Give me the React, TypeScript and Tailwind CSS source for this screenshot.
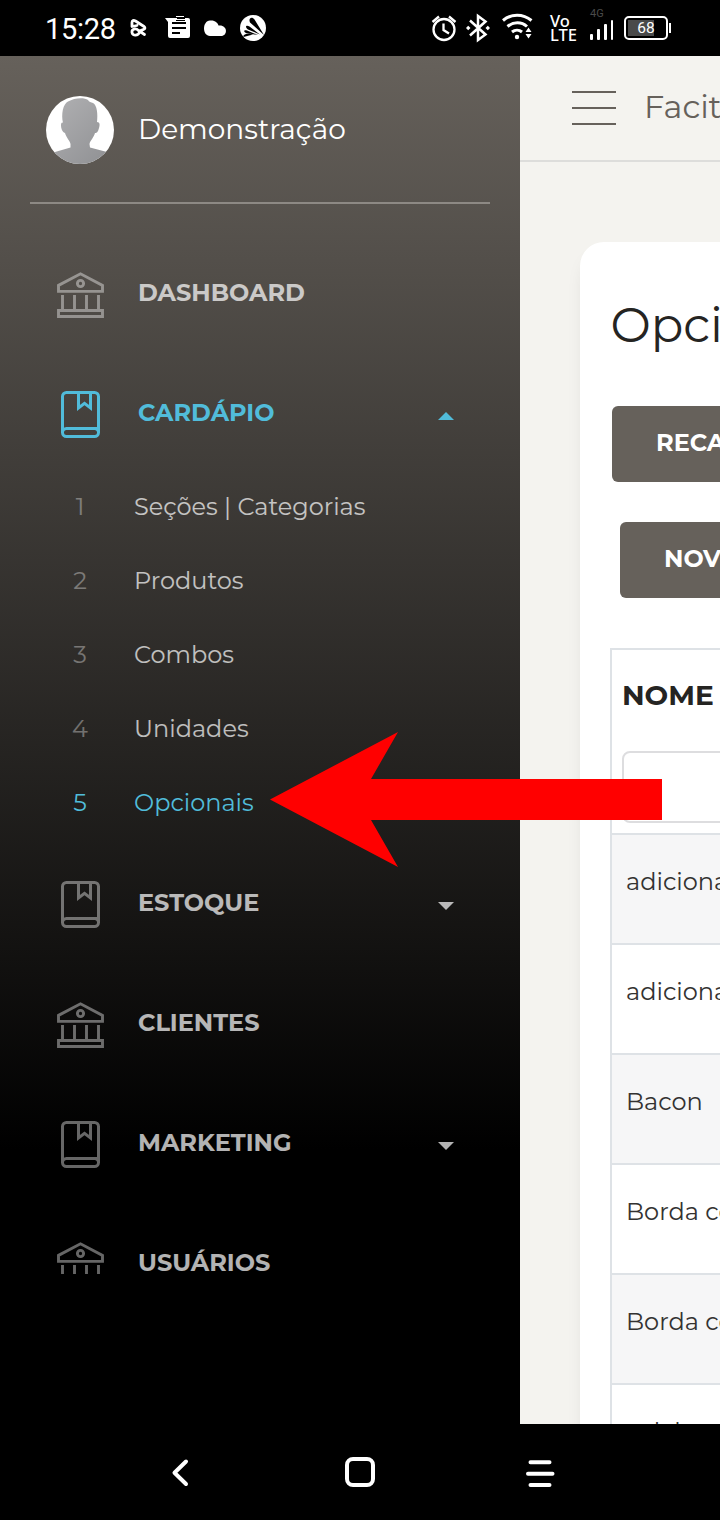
import React from "react";

function BankIcon({ clipped = false }: { clipped?: boolean }) {
  return (
    <svg
      className={clipped ? "h-[32px] w-[48px]" : "h-[47px] w-[48px]"}
      viewBox={clipped ? "0 0 48 32" : "0 0 48 47"}
      fill="none"
      stroke="currentColor"
      strokeWidth="2.9"
    >
      <path d="M1.5 13.4 23.5 1.8 45.5 13.4V19.4H1.5Z" />
      <circle cx="23.5" cy="11.5" r="3.1" />
      <path d="M5.5 23V37M17.5 23V37M29.5 23V37M41.5 23V37" />
      <path d="M1.5 38.5H45.5V44.5H1.5Z" />
    </svg>
  );
}

function BookIcon() {
  return (
    <svg className="h-[47px] w-[39px]" viewBox="0 0 39 47" fill="none" stroke="currentColor" strokeWidth="3">
      <rect x="1.5" y="1.5" width="36" height="44" rx="4" />
      <path d="M37.5 37.5H5.5A4 4 0 0 0 1.5 41.5M33.500 37.500A4 4 0 0 1 37.500 41.500" />
      <path d="M17.5 1.5V17L23.5 12.3 29.5 17V1.5" />
    </svg>
  );
}

type ItemProps = { label: string; icon: "bank" | "book" | "clipped"; open?: boolean; caret?: boolean };

function MenuItem({ label, icon, open, caret }: ItemProps) {
  return (
    <a className={`flex h-[120px] items-center ${open ? "text-[#51bcda]" : "text-white"}`}>
      <span className={`flex w-[138px] shrink-0 pt-[5px] ${open ? "" : "opacity-40"} ${icon === "book" ? "pl-[61px]" : "pl-[57px]"}`}>
        {icon === "book" ? <BookIcon /> : (
          <span className="flex h-[47px] items-start pt-[1px]"><BankIcon clipped={icon === "clipped"} /></span>
        )}
      </span>
      <span className={`pt-[2px] text-2xl font-bold ${open ? "" : "opacity-70"}`}>{label}</span>
      {caret && (
        <svg className={`mt-[7px] mr-[66px] ml-auto h-[8px] w-[16px] ${open ? "" : "opacity-70"}`} viewBox="0 0 16 8" fill="currentColor">
          <path d={open ? "M0 8 8 0 16 8Z" : "M0 0 8 8 16 0Z"} />
        </svg>
      )}
    </a>
  );
}

const sections = [
  { n: "1", label: "Seções | Categorias" },
  { n: "2", label: "Produtos" },
  { n: "3", label: "Combos" },
  { n: "4", label: "Unidades" },
  { n: "5", label: "Opcionais" },
];

function Avatar() {
  return (
    <svg className="h-[68px] w-[68px]" viewBox="0 0 68 68">
      <defs>
        <clipPath id="avatar-clip"><circle cx="34" cy="34" r="34" /></clipPath>
        <linearGradient id="avatar-fill" x1="0" y1="0" x2="1" y2="1">
          <stop offset="0" stopColor="#b2b2b4" />
          <stop offset="1" stopColor="#8e8f92" />
        </linearGradient>
      </defs>
      <g clipPath="url(#avatar-clip)">
        <rect width="68" height="68" fill="#fff" />
        <path
          d="M17 27C15 18 17 8 22 5.500C28 2 38 1 42 4C43 6 45 6 47 7C51 9 52 18 51 26C54 26 54 29 53 32C52 36 51 37 49 37C48 41 44 45 43.500 48L44 51.500L61 56L68 59V68H0V59L9 56L24.500 51.500V48C24 45 20 41 19 37C16 36 15 32 15 29C15 27 16 26 17 27Z"
          fill="url(#avatar-fill)"
        />
      </g>
    </svg>
  );
}

function Sidebar() {
  return (
    <aside className="h-full w-[520px] shrink-0 bg-[linear-gradient(#66615b_0%,#000_80%)] text-white">
      <div className="mx-[30px] flex h-[148px] items-center gap-[24px] border-b-2 border-[#8d8984] pt-[2px] pl-[16px]">
        <Avatar />
        <span className="pb-[2px] text-[28px] font-normal">Demonstração</span>
      </div>
      <nav className="pt-[28px]">
        <MenuItem label="DASHBOARD" icon="bank" />
        <MenuItem label="CARDÁPIO" icon="book" open caret />
        <ul className="-mt-[2px] mb-[2px]">
          {sections.map((s) => (
            <li key={s.n} className={`flex h-[74px] items-center text-2xl ${s.n === "5" ? "text-[#51bcda]" : "text-white"}`}>
              <span className={`w-[160px] text-center ${s.n === "5" ? "" : "opacity-35"}`}>{s.n}</span>
              <span className={`-ml-[26px] ${s.n === "5" ? "" : "opacity-70"}`}>{s.label}</span>
            </li>
          ))}
        </ul>
        <MenuItem label="ESTOQUE" icon="book" caret />
        <MenuItem label="CLIENTES" icon="bank" />
        <MenuItem label="MARKETING" icon="book" caret />
        <MenuItem label="USUÁRIOS" icon="clipped" />
      </nav>
    </aside>
  );
}

const rows = ["adicional", "adicional", "Bacon", "Borda com", "Borda com", "calabresa"];

function Content() {
  return (
    <main className="h-full w-[200px] overflow-hidden bg-[#f4f3ef] whitespace-nowrap">
      <header className="flex h-[106px] items-center border-b-2 border-[#dddddb] pl-[52px] text-[#66615b]">
        <span className="flex w-[44px] shrink-0 flex-col gap-[14px]">
          <span className="h-[2px] bg-[#66615b]" />
          <span className="h-[2px] bg-[#66615b]" />
          <span className="h-[2px] bg-[#66615b]" />
        </span>
        <span className="ml-[28px] pb-[2px] text-[32px]">Facit</span>
      </header>
      <section className="mt-[80px] ml-[60px] h-[1300px] w-[600px] rounded-[24px] bg-white pt-[48px] pl-[30px] text-[#252422] shadow-[0_12px_20px_-8px_rgba(0,0,0,0.15)]">
        <h1 className="h-[72px] pl-[0.500px] text-5xl leading-[70px] font-normal">Opcionais</h1>
        <div className="mt-[44px] flex flex-col gap-[40px] pl-[2px] text-2xl font-bold text-white">
          <button className="flex h-[76px] w-[400px] items-center rounded-[6px] bg-[#66615b] pb-[3px] pl-[44px]">RECALCULAR</button>
          <button className="ml-[8px] flex h-[76px] w-[400px] items-center rounded-[6px] bg-[#66615b] pb-[3px] pl-[44px]">NOVO</button>
        </div>
        <div className="mt-[50px] border-t-2 border-l-2 border-[#dee2e6]">
          <div className="h-[183px] pl-[10px]">
            <div className="flex h-[101px] items-center pb-[11px] text-[28px] font-bold">NOME</div>
            <div className="h-[72px] w-[400px] rounded-[8px] border-2 border-[#dddddf] bg-white" />
          </div>
          {rows.map((row, i) => (
            <div
              key={i}
              className={`flex h-[110px] items-center border-t-2 border-[#dee2e6] pb-[14px] pl-[14px] text-2xl text-[#333231] ${i % 2 === 0 ? "bg-[#f6f6f7]" : "bg-white"}`}
            >
              {row}
            </div>
          ))}
        </div>
      </section>
    </main>
  );
}

function StatusBar() {
  return (
    <div className="flex h-[56px] shrink-0 items-center bg-black text-white">
      <span className="ml-[45px] w-[84px] pt-[4px] font-['Roboto'] text-[29px] tracking-[-0.300px]">15:28</span>
      <svg className="h-[56px] w-[150px]" viewBox="129 0 150 56" fill="none">
        <path
          d="M132 26.500V22.500C132 20.500 133.500 20 135.500 21L144 26.500C146.500 29 143 29.500 140 31C139 36 132.500 36.500 132 32.500C131.500 28.500 136 28 138.500 30.500L144.500 34.500M132 26.500L137 25.500"
          stroke="#fff" strokeWidth="2.800" strokeLinecap="round" strokeLinejoin="round"
        />
        <path d="M165 18H188a2 2 0 0 1 2 2V36a2 2 0 0 1-2 2H170a2 2 0 0 1-2-2V22Z" fill="#fff" />
        <path d="M172 23H186M172 28H186M172 33H180" stroke="#000" strokeWidth="2" />
        <path d="M176 16.500H184" stroke="#fff" />
        <path d="M177 18.500H185M176 20.500H185" stroke="#000" />
        <path d="M210 36C202 36 202 21 210 20.500C215 20 218 23 218.500 25.500C228 24.500 228 36 221 36Z" fill="#fff" />
        <circle cx="253" cy="28" r="13" fill="#fff" />
        <path d="M264 35 250 22.500C248 18 252 16 254.500 19.500ZM260 34.500 248 29.500C244.500 27 246 24.500 249.500 26.500ZM258 35 246 33C243 31.500 244 29.500 247 30.500ZM243.500 35.500C246 32.500 250 34 253 34.500L243.500 37Z" fill="#000" />
      </svg>
      <svg className="ml-[151px] h-[56px] w-[104px]" viewBox="430 0 104 56" fill="none" stroke="#fff" strokeWidth="2.300">
        <circle cx="444" cy="29.500" r="10.500" />
        <path d="M443.500 23.500V30L449 33.500M432.500 22 439 16.500M455.500 22 449 16.500" />
        <path d="M470 20.500 485.500 34.500 478 40V16L485.500 21.500 470 35.500" strokeWidth="2.500" />
        <path d="M468.200 25.700 470.500 28 468.200 30.300 466 28ZM487.800 25.700 490 28 487.800 30.300 485.500 28Z" fill="#fff" stroke="none" />
        <path d="M503 20.500C511 13.500 523 13.500 531.500 20.500M507.500 26.500C513.500 21.500 521.500 21.500 527 26.500M512 32C515 29.500 519 29.500 522 32" strokeWidth="3" />
        <circle cx="517" cy="37" r="2.200" fill="#fff" stroke="none" />
        <path d="M525.500 32H531.500L528.500 27.500ZM525.500 34H531.500L528.500 38.500Z" fill="#fff" stroke="none" />
      </svg>
      <span className="ml-[16px] w-[40px] font-['Noto_Sans'] text-[16.500px] leading-[14px] font-medium">
        <span className="block">Vo</span>
        <span className="block">LTE</span>
      </span>
      <span className="flex h-[56px] w-[34px] flex-col pt-[8px]">
        <span className="font-['Roboto'] text-[11px] leading-[12px] text-[#4a4a4a]">4G</span>
        <span className="flex h-[20px] items-end gap-[4px]">
          <span className="h-[6px] w-[3px] rounded-[1px] bg-white" />
          <span className="h-[11px] w-[3px] rounded-[1px] bg-white" />
          <span className="h-[16px] w-[3px] rounded-[1px] bg-white" />
          <span className="h-[20px] w-[2px] rounded-[1px] bg-white" />
        </span>
      </span>
      <span className="flex h-[24px] w-[44px] items-center justify-center rounded-[5px] border-2 border-white bg-[linear-gradient(#4a4a4a,#4a4a4a)] bg-[length:26px_16px] bg-[position:2px_2px] bg-no-repeat pt-[2px] font-['Roboto'] text-[15.500px]">68</span>
      <span className="ml-[1px] h-[10px] w-[2px] bg-white" />
    </div>
  );
}

function NavBar() {
  return (
    <div className="grid h-[96px] shrink-0 bg-black">
      <svg className="h-[96px] w-[720px]" viewBox="0 1424 720 96" fill="none" stroke="#fff" strokeWidth="4" strokeLinecap="round" strokeLinejoin="round">
        <path d="M186 1461.500 174.500 1472.800 186 1484" />
        <rect x="347" y="1459" width="26" height="26" rx="6" />
        <path d="M530.500 1462.200H549.500M528 1473.800H552.500M530.500 1485H549.500" />
      </svg>
    </div>
  );
}

export default function App() {
  return (
    <div className="relative flex h-[1520px] w-[720px] flex-col overflow-hidden bg-black font-['Montserrat','Inter',sans-serif]">
      <StatusBar />
      <div className="flex h-[1368px] overflow-hidden">
        <Sidebar />
        <Content />
      </div>
      <NavBar />
      <svg className="absolute top-[732px] left-[270px] h-[135px] w-[392px]" viewBox="0 0 392 135">
        <path d="M0 67.500 128 0 101 47H392V88H101L128 135Z" fill="#f00" />
      </svg>
    </div>
  );
}
